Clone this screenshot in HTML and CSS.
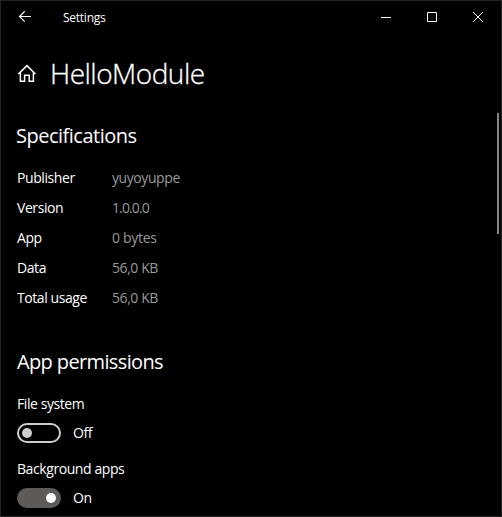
FILE: index.html
```html
<!DOCTYPE html>
<html lang="en">
<head>
<meta charset="utf-8">
<title>Settings</title>
<link rel="stylesheet" href="styles.css">
</head>
<body>
<div class="window">
  <header class="titlebar">
    <svg class="back" width="14" height="12" viewBox="0 0 14 12"><path d="M1.5 5.5H13M6.7 .3 1.5 5.5l5.2 5.2"/></svg>
    <span class="caption">Settings</span>
    <div class="controls">
      <svg width="46" height="32" viewBox="0 0 46 32"><path d="M18 16.5h10"/></svg>
      <svg width="46" height="32" viewBox="0 0 46 32"><path d="M18.5 11.5h9v9h-9z"/></svg>
      <svg width="46" height="32" viewBox="0 0 46 32"><path d="M18 11l10 10M28 11 18 21"/></svg>
    </div>
  </header>
  <main class="content">
    <div class="heading">
      <svg class="home" width="19" height="18" viewBox="0 0 19 18"><path d="M1.4 10 10 1.6l8.4 8.4M3.4 8.6v8.7h4.2v-6h4.6v6h4.2V8.6"/></svg>
      <h1>HelloModule</h1>
    </div>
    <h2 class="specs-title">Specifications</h2>
    <dl class="specs">
      <dt>Publisher</dt><dd>yuyoyuppe</dd>
      <dt>Version</dt><dd class="version">1.0.0.0</dd>
      <dt>App</dt><dd class="size">0 bytes</dd>
      <dt>Data</dt><dd>56,0 KB</dd>
      <dt>Total usage</dt><dd>56,0 KB</dd>
    </dl>
    <h2 class="perms-title">App permissions</h2>
    <section class="permission">
      <div class="label">File system</div>
      <div class="setting"><span class="toggle"></span><span>Off</span></div>
    </section>
    <section class="permission">
      <div class="label">Background apps</div>
      <div class="setting"><span class="toggle on"></span><span>On</span></div>
    </section>
  </main>
  <div class="scrollbar"></div>
</div>
</body>
</html>
```
FILE: styles.css
```css
* { box-sizing: border-box; }
body {
  margin: 0;
  overflow: hidden;
  background: #000;
  color: #fff;
  font: 14px/20px "Open Sans", "Noto Sans", sans-serif;
  letter-spacing: -0.42px;
}
svg { fill: none; stroke: #fff; stroke-width: 1; display: block; }
.window {
  position: relative;
  width: 502px;
  height: 517px;
  border: 1px solid #242424;
  overflow: hidden;
}
.titlebar { display: flex; align-items: center; height: 32px; padding-left: 17px; }
.back { stroke-width: 1.2; }
.caption { margin-left: 31px; font-size: 12px; line-height: 16px; padding-top: 2px; letter-spacing: -0.25px; }
.controls { display: flex; margin-left: auto; height: 32px; }
.content { padding-left: 16px; }
.heading { display: flex; align-items: center; height: 40px; margin-top: 20px; }
.home { stroke-width: 1.5; }
h1, h2, dl, dd { margin: 0; font-weight: 400; }
h1 {
  margin-left: 14px;
  font-size: 28px;
  line-height: 40px;
  font-weight: 300;
  letter-spacing: -0.5px;
  -webkit-text-stroke: 0.3px #fff;
}
h2 { font-size: 20px; line-height: 28px; letter-spacing: -0.5px; }
.specs-title { margin-top: 29px; margin-left: -1px; }
.specs { display: grid; grid-template-columns: 95px 1fr; grid-auto-rows: 30px; line-height: 30px; margin-top: 13px; }
dd { color: #999; }
.version { letter-spacing: -0.9px; }
.size { letter-spacing: -0.3px; }
.perms-title { margin-top: 35px; letter-spacing: -0.63px; }
.permission { height: 65px; padding-top: 18px; }
.label { line-height: 20px; }
.setting { display: flex; align-items: center; height: 20px; gap: 12px; margin-top: 9px; }
.toggle {
  display: flex;
  align-items: center;
  width: 44px;
  height: 20px;
  padding: 0 3px;
  border: 2px solid #ccc;
  border-radius: 10px;
}
.toggle::before { content: ""; width: 10px; height: 10px; border-radius: 5px; background: #ccc; }
.toggle.on { justify-content: flex-end; border-color: #5d5a58; background: #5d5a58; }
.toggle.on::before { background: #fff; }
.scrollbar { position: absolute; right: 2px; top: 112px; width: 2px; height: 121px; background: #858585; }
```
